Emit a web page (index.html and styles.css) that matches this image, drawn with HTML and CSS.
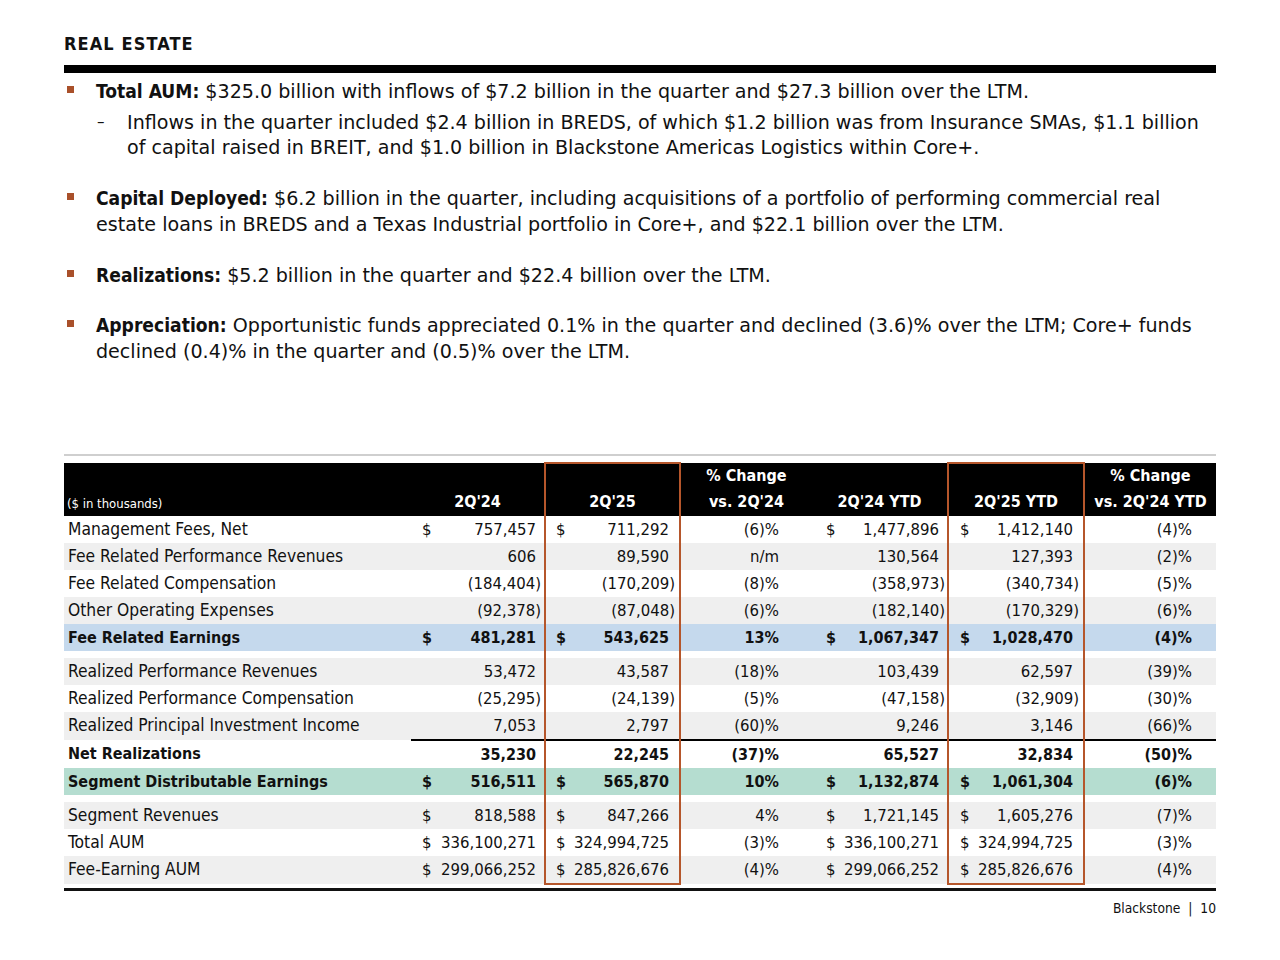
FILE: index.html
```html
<!DOCTYPE html>
<html lang="en">
<head>
<meta charset="utf-8">
<title>Real Estate</title>
<link rel="stylesheet" href="styles.css">
</head>
<body>
<div class="page">
  <h1 class="title">REAL ESTATE</h1>
  <div class="rule"></div>
  <ul class="bullets">
    <li><b>Total AUM:</b> $325.0 billion with inflows of $7.2 billion in the quarter and $27.3 billion over the LTM.
      <ul class="sub">
        <li>Inflows in the quarter included $2.4 billion in BREDS, of which $1.2 billion was from Insurance SMAs, $1.1 billion of capital raised in BREIT, and $1.0 billion in Blackstone Americas Logistics within Core+.</li>
      </ul>
    </li>
    <li><b>Capital Deployed:</b> $6.2 billion in the quarter, including acquisitions of a portfolio of performing commercial real estate loans in BREDS and a Texas Industrial portfolio in Core+, and $22.1 billion over the LTM.</li>
    <li><b>Realizations:</b> $5.2 billion in the quarter and $22.4 billion over the LTM.</li>
    <li><b>Appreciation:</b> Opportunistic funds appreciated 0.1% in the quarter and declined (3.6)% over the LTM; Core+ funds declined (0.4)% in the quarter and (0.5)% over the LTM.</li>
  </ul>

  <div class="table-wrap">
    <table class="fin">
      <colgroup>
        <col class="c-label">
        <col class="c-a">
        <col class="c-b">
        <col class="c-c">
        <col class="c-d">
        <col class="c-e">
        <col class="c-f">
      </colgroup>
      <thead>
        <tr>
          <th class="unit">($ in thousands)</th>
          <th>2Q'24</th>
          <th class="box">2Q'25</th>
          <th>% Change<br>vs. 2Q'24</th>
          <th>2Q'24 YTD</th>
          <th class="box">2Q'25 YTD</th>
          <th>% Change<br>vs. 2Q'24 YTD</th>
        </tr>
      </thead>
      <tbody>
        <tr>
          <td class="lbl">Management Fees, Net</td>
          <td class="m a p"><span class="cur">$</span>757,457</td>
          <td class="m b box p"><span class="cur">$</span>711,292</td>
          <td class="pct">(6)%</td>
          <td class="m d p"><span class="cur">$</span>1,477,896</td>
          <td class="m e box p"><span class="cur">$</span>1,412,140</td>
          <td class="pct f">(4)%</td>
        </tr>
        <tr class="gray">
          <td class="lbl">Fee Related Performance Revenues</td>
          <td class="m a p">606</td>
          <td class="m b box p">89,590</td>
          <td class="pct">n/m</td>
          <td class="m d p">130,564</td>
          <td class="m e box p">127,393</td>
          <td class="pct f">(2)%</td>
        </tr>
        <tr>
          <td class="lbl">Fee Related Compensation</td>
          <td class="m a">(184,404)</td>
          <td class="m b box">(170,209)</td>
          <td class="pct">(8)%</td>
          <td class="m d">(358,973)</td>
          <td class="m e box">(340,734)</td>
          <td class="pct f">(5)%</td>
        </tr>
        <tr class="gray">
          <td class="lbl">Other Operating Expenses</td>
          <td class="m a">(92,378)</td>
          <td class="m b box">(87,048)</td>
          <td class="pct">(6)%</td>
          <td class="m d">(182,140)</td>
          <td class="m e box">(170,329)</td>
          <td class="pct f">(6)%</td>
        </tr>
        <tr class="blue bold">
          <td class="lbl">Fee Related Earnings</td>
          <td class="m a p"><span class="cur">$</span>481,281</td>
          <td class="m b box p"><span class="cur">$</span>543,625</td>
          <td class="pct">13%</td>
          <td class="m d p"><span class="cur">$</span>1,067,347</td>
          <td class="m e box p"><span class="cur">$</span>1,028,470</td>
          <td class="pct f">(4)%</td>
        </tr>
        <tr class="spacer">
          <td></td><td></td><td class="box"></td><td></td><td></td><td class="box"></td><td></td>
        </tr>
        <tr class="gray">
          <td class="lbl">Realized Performance Revenues</td>
          <td class="m a p">53,472</td>
          <td class="m b box p">43,587</td>
          <td class="pct">(18)%</td>
          <td class="m d p">103,439</td>
          <td class="m e box p">62,597</td>
          <td class="pct f">(39)%</td>
        </tr>
        <tr>
          <td class="lbl">Realized Performance Compensation</td>
          <td class="m a">(25,295)</td>
          <td class="m b box">(24,139)</td>
          <td class="pct">(5)%</td>
          <td class="m d">(47,158)</td>
          <td class="m e box">(32,909)</td>
          <td class="pct f">(30)%</td>
        </tr>
        <tr class="gray">
          <td class="lbl">Realized Principal Investment Income</td>
          <td class="m a p">7,053</td>
          <td class="m b box p">2,797</td>
          <td class="pct">(60)%</td>
          <td class="m d p">9,246</td>
          <td class="m e box p">3,146</td>
          <td class="pct f">(66)%</td>
        </tr>
        <tr class="bold total">
          <td class="lbl">Net Realizations</td>
          <td class="m a p">35,230</td>
          <td class="m b box p">22,245</td>
          <td class="pct">(37)%</td>
          <td class="m d p">65,527</td>
          <td class="m e box p">32,834</td>
          <td class="pct f">(50)%</td>
        </tr>
        <tr class="green bold">
          <td class="lbl">Segment Distributable Earnings</td>
          <td class="m a p"><span class="cur">$</span>516,511</td>
          <td class="m b box p"><span class="cur">$</span>565,870</td>
          <td class="pct">10%</td>
          <td class="m d p"><span class="cur">$</span>1,132,874</td>
          <td class="m e box p"><span class="cur">$</span>1,061,304</td>
          <td class="pct f">(6)%</td>
        </tr>
        <tr class="spacer">
          <td></td><td></td><td class="box"></td><td></td><td></td><td class="box"></td><td></td>
        </tr>
        <tr class="gray">
          <td class="lbl">Segment Revenues</td>
          <td class="m a p"><span class="cur">$</span>818,588</td>
          <td class="m b box p"><span class="cur">$</span>847,266</td>
          <td class="pct">4%</td>
          <td class="m d p"><span class="cur">$</span>1,721,145</td>
          <td class="m e box p"><span class="cur">$</span>1,605,276</td>
          <td class="pct f">(7)%</td>
        </tr>
        <tr>
          <td class="lbl">Total AUM</td>
          <td class="m a p"><span class="cur">$</span>336,100,271</td>
          <td class="m b box p"><span class="cur">$</span>324,994,725</td>
          <td class="pct">(3)%</td>
          <td class="m d p"><span class="cur">$</span>336,100,271</td>
          <td class="m e box p"><span class="cur">$</span>324,994,725</td>
          <td class="pct f">(3)%</td>
        </tr>
        <tr class="gray last">
          <td class="lbl">Fee-Earning AUM</td>
          <td class="m a p"><span class="cur">$</span>299,066,252</td>
          <td class="m b box p"><span class="cur">$</span>285,826,676</td>
          <td class="pct">(4)%</td>
          <td class="m d p"><span class="cur">$</span>299,066,252</td>
          <td class="m e box p"><span class="cur">$</span>285,826,676</td>
          <td class="pct f">(4)%</td>
        </tr>
      </tbody>
    </table>
  </div>

  <footer class="foot">Blackstone <span class="sep">|</span> 10</footer>
</div>
</body>
</html>
```

FILE: styles.css
```css
* { box-sizing: border-box; }

html, body {
  margin: 0;
  padding: 0;
  background: #ffffff;
}

body {
  font-family: "DejaVu Sans Condensed", "DejaVu Sans", sans-serif;
  color: #111111;
}

.page {
  width: 1280px;
  height: 960px;
  padding: 0 64px;
  overflow: hidden;
}

.title {
  margin: 0;
  padding-top: 33px;
  height: 65px;
  font-size: 18px;
  line-height: 22px;
  font-weight: bold;
  letter-spacing: 1.1px;
  color: #111;
}

.rule {
  height: 8px;
  background: #000;
}

.bullets {
  list-style: none;
  margin: 6px 0 0 0;
  padding: 0 0 0 32px;
  font-family: "DejaVu Sans", sans-serif;
  font-size: 19.1px;
  line-height: 25.7px;
}

.bullets > li {
  position: relative;
  margin-bottom: 25px;
}

.bullets > li::before {
  content: "";
  position: absolute;
  left: -29px;
  top: 7px;
  width: 7px;
  height: 7px;
  background: #a9502a;
}

.bullets b {
  font-family: "DejaVu Sans Condensed", "DejaVu Sans", sans-serif;
  font-weight: bold;
}

.sub {
  list-style: none;
  margin: 5px 0 0 0;
  padding: 0 0 0 31px;
}

.sub > li { position: relative; }

.sub > li::before {
  content: "\2013";
  position: absolute;
  left: -30px;
  top: 0;
  font-size: 15px;
}

.table-wrap {
  margin-top: 89px;
  border-top: 2px solid #cfcfcf;
  padding-top: 6px;
  padding-bottom: 3px;
  border-bottom: 3px solid #111;
}

.fin {
  width: 1152px;
  border-collapse: collapse;
  table-layout: fixed;
  font-size: 17.3px;
}

.c-label { width: 347px; }
.c-a { width: 134px; }
.c-b { width: 135px; }
.c-c { width: 132px; }
.c-d { width: 136px; }
.c-e { width: 136px; }
.c-f { width: 132px; }

.fin th {
  background: #000;
  color: #fff;
  font-weight: bold;
  font-size: 16px;
  line-height: 26.5px;
  height: 53px;
  vertical-align: bottom;
  text-align: center;
  padding: 0;
  white-space: nowrap;
}

.fin th.unit {
  text-align: left;
  font-weight: normal;
  font-size: 13px;
  line-height: 16px;
  padding: 0 0 4px 3px;
}

.fin td {
  height: 27px;
  padding: 0;
  line-height: 27px;
  white-space: nowrap;
}

.fin td.lbl { padding-left: 4px; }

.fin td.m { text-align: right; font-size: 16.6px; }
.fin td.a { padding: 0 3px 0 11px; }
.fin td.b { padding: 0 4px 0 10px; }
.fin td.d { padding: 0 2px 0 14px; }
.fin td.e { padding: 0 4px 0 11px; }
.fin td.a.p { padding-right: 8px; }
.fin td.b.p { padding-right: 10px; }
.fin td.d.p { padding-right: 8px; }
.fin td.e.p { padding-right: 10px; }

.cur { float: left; }

.fin td.pct { text-align: right; padding-right: 33px; font-size: 16.6px; }
.fin td.pct.f { padding-right: 24px; }

.fin tr.gray td { background: #efefef; }
.fin tr.blue td { background: #c5d9ed; }
.fin tr.green td { background: #b5ddd0; }
.fin tr.bold td { font-weight: bold; font-size: 16px; }

.fin tr.spacer td { height: 7px; line-height: 7px; background: #fff; }

.fin tr.total td:not(.lbl) { border-top: 2px solid #000; }

.fin .box {
  border-left: 2px solid #b5562b;
  border-right: 2px solid #b5562b;
}
.fin th.box { border-top: 2px solid #b5562b; }
.fin tr.last td.box { border-bottom: 2px solid #b5562b; }

.foot {
  margin-top: 9px;
  text-align: right;
  font-size: 13.7px;
  color: #111;
}

.foot .sep { margin: 0 4px; }
```
